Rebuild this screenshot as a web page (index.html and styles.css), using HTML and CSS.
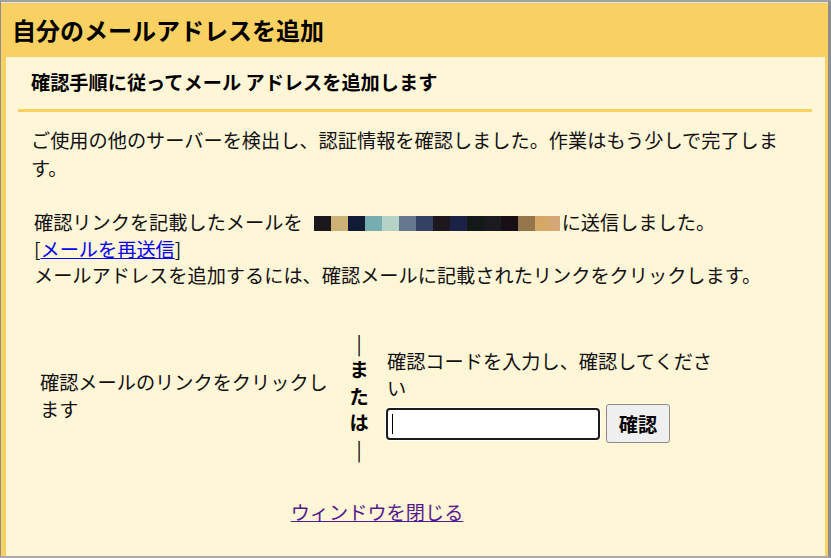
FILE: index.html
```html
<!DOCTYPE html>
<html lang="ja">
<head>
    <meta charset="UTF-8">
    <meta name="viewport" content="width=device-width, initial-scale=1.0">
    <title>自分のメールアドレスを追加</title>
    <link rel="stylesheet" href="styles.css">
</head>
<body>

    <div class="frame">
        <h1 class="title">自分のメールアドレスを追加</h1>

        <div class="panel">
            <h2 class="subtitle">確認手順に従ってメール アドレスを追加します</h2>
            <div class="rule"></div>

            <p class="lead">ご使用の他のサーバーを検出し、認証情報を確認しました。作業はもう少しで完了します。</p>

            <div class="sent">
                <div>確認リンクを記載したメールを<span class="redact"></span>に送信しました。</div>
                <div>[<a href="#" class="resend">メールを再送信</a>]</div>
                <div>メールアドレスを追加するには、確認メールに記載されたリンクをクリックします。</div>
            </div>

            <div class="verify">
                <div class="choice">
                    <div class="choice-left">確認メールのリンクをクリックします</div>
                    <div class="choice-or">
                        <span class="bar">|</span>
                        <span>ま</span>
                        <span>た</span>
                        <span>は</span>
                        <span class="bar">|</span>
                    </div>
                    <div class="choice-right">
                        <div>確認コードを入力し、確認してください</div>
                        <div class="code-row">
                            <span class="code-field">
                                <input type="text" id="codigo" class="code-input">
                                <span class="caret"></span>
                            </span>
                            <button type="button" class="code-btn">確認</button>
                        </div>
                    </div>
                </div>

                <div class="close">
                    <a href="#" class="close-link">ウィンドウを閉じる</a>
                </div>
            </div>
        </div>
    </div>

</body>
</html>
```

FILE: styles.css
```css
/* janela de verificação */
html, body {
    margin: 0;
    padding: 0;
    height: 100%;
}

body {
    font-family: "Noto Sans CJK JP", "Noto Sans", sans-serif;
    font-size: 19.2px;
    color: #111;
    background: #fff5d7;
}

.frame {
    box-sizing: border-box;
    height: 558px;
    display: flex;
    flex-direction: column;
    background: #f9d162;
    border-top: 2px solid #a2a2a2;
    border-left: 1px solid #8e8e8e;
    border-right: 3px solid #8e8e8e;
    border-bottom: 2px solid #ababab;
}

.title {
    margin: 0;
    padding-left: 11px;
    height: 54px;
    line-height: 54px;
    font-size: 24px;
    font-weight: bold;
    border-top: 1px solid #e2e2e2;
    color: #000;
}

.panel {
    flex: 1;
    margin: 0 3px 0 5px;
    padding: 0 13px 0 12px;
    background: #fff5d7;
}

.subtitle {
    margin: 0;
    padding: 12px 0 0 13px;
    font-size: 19.2px;
    font-weight: bold;
    line-height: 27px;
    color: #000;
}

.rule {
    height: 3px;
    margin-top: 13px;
    background: #f9d162;
}

.lead {
    margin: 14px 0 0 0;
    padding-left: 13px;
    line-height: 28px;
}

.sent {
    margin-top: 27px;
    padding-left: 16px;
    line-height: 26.5px;
}

.redact {
    display: inline-block;
    width: 246px;
    height: 15px;
    margin: 0 2px 0 11px;
    vertical-align: -1px;
    background: linear-gradient(to right,
        #1c171b 0 17px, #cdb278 17px 34px, #121b36 34px 51px,
        #76adb1 51px 68px, #b6d1c5 68px 85px, #667890 85px 102px,
        #334263 102px 119px, #1e171d 119px 136px, #1c2148 136px 153px,
        #141819 153px 170px, #1b1a21 170px 187px, #170f15 187px 204px,
        #94764a 204px 221px, #d5a867 221px 236px, #d3a876 236px 246px);
}

.resend {
    color: #0000ee;
}

.verify {
    width: 686px;
    margin: 41px 0 0 16px;
}

.choice {
    display: flex;
    align-items: center;
}

.choice-left {
    width: 300px;
    padding-left: 6px;
    line-height: 27px;
}

.choice-or {
    width: 38px;
    display: flex;
    flex-direction: column;
    align-items: center;
    line-height: 26.5px;
    font-weight: bold;
    color: #000;
}

.choice-or .bar {
    font-weight: normal;
}

.choice-right {
    width: 333px;
    padding-left: 9px;
    line-height: 27px;
}

.code-row {
    display: flex;
    align-items: center;
    gap: 6px;
    margin: 2px 0 0 -1px;
}

.code-field {
    position: relative;
    display: block;
}

.code-input {
    box-sizing: border-box;
    display: block;
    width: 214px;
    height: 32px;
    padding: 0 4px;
    font-size: 16px;
    background: #fff;
    border: 2px solid #1b1b1b;
    border-radius: 4px;
    box-shadow: 0 0 0 1px #fff;
    outline: none;
}

.caret {
    position: absolute;
    left: 6px;
    top: 6px;
    width: 1px;
    height: 20px;
    background: #000;
}

.code-btn {
    box-sizing: border-box;
    width: 64px;
    height: 39px;
    padding: 0;
    font-family: inherit;
    font-size: 19.2px;
    font-weight: bold;
    color: #000;
    background: #efefef;
    border: 1px solid #8a8a8a;
    border-radius: 3px;
}

.close {
    margin-top: 37px;
    text-align: center;
    line-height: 27px;
}

.close-link {
    color: #551a8b;
}
```
